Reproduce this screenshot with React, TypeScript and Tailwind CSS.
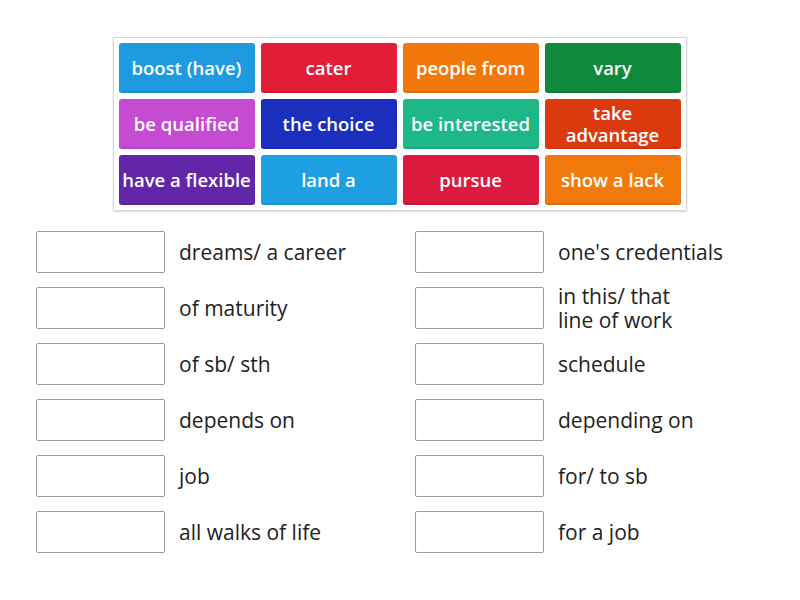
import React from "react";

const tiles: { t: string; c: string; w?: boolean }[] = [
  { t: "boost (have)", c: "bg-[#1e9be0]" },
  { t: "cater", c: "bg-[#e21d38]" },
  { t: "people from", c: "bg-[#f2780c]" },
  { t: "vary", c: "bg-[#0f8a3a]" },
  { t: "be qualified", c: "bg-[#c54bd3]" },
  { t: "the choice", c: "bg-[#1a2fbd]" },
  { t: "be interested", c: "bg-[#1eb787]" },
  { t: "take advantage", c: "bg-[#dc3a0e]", w: true },
  { t: "have a flexible", c: "bg-[#6326a8]" },
  { t: "land a", c: "bg-[#1e9fe2]" },
  { t: "pursue", c: "bg-[#dc1a3e]" },
  { t: "show a lack", c: "bg-[#f27a0c]" },
];

const left: React.ReactNode[] = ["dreams/ a career", "of maturity", "of sb/ sth", "depends on", "job", "all walks of life"];
const right: React.ReactNode[] = [
  "one's credentials",
  <>in this/ that<br />line of work</>,
  "schedule",
  "depending on",
  "for/ to sb",
  "for a job",
];

function Col({ items }: { items: React.ReactNode[] }) {
  return (
    <div className="w-[379px] flex flex-col gap-[14px]">
      {items.map((s, i) => (
        <div key={i} className="flex items-center h-[42px]">
          <div className="w-[129px] h-[42px] border border-[#9a9a9a] rounded-[2px] bg-white shrink-0" />
          <div className="ml-[14px] text-[21px] leading-[24px] text-[#222]">{s}</div>
        </div>
      ))}
    </div>
  );
}

export default function App() {
  return (
    <div className="w-[800px] h-[600px] bg-white relative" style={{ fontFamily: '"Open Sans", sans-serif' }}>
      <div className="pt-[37px] flex justify-center">
        <div className="ml-[-1px] border border-[#d6d6d6] shadow-[0_1px_2px_rgba(0,0,0,0.15)] p-[5px] grid grid-cols-[repeat(4,136px)] grid-rows-[repeat(3,50px)] gap-[6px] bg-white">
          {tiles.map((x) => (
            <div
              key={x.t}
              className={`${x.c} ${x.w ? "" : "whitespace-nowrap"} rounded-[3px] flex items-center justify-center text-center text-white font-semibold text-[18.5px] leading-[22px] shadow-[inset_0_-2px_0_rgba(0,0,0,0.08)]`}
            >
              {x.t}
            </div>
          ))}
        </div>
      </div>
      <div className="flex pl-[36px] mt-[20px]">
        <Col items={left} />
        <Col items={right} />
      </div>
    </div>
  );
}
